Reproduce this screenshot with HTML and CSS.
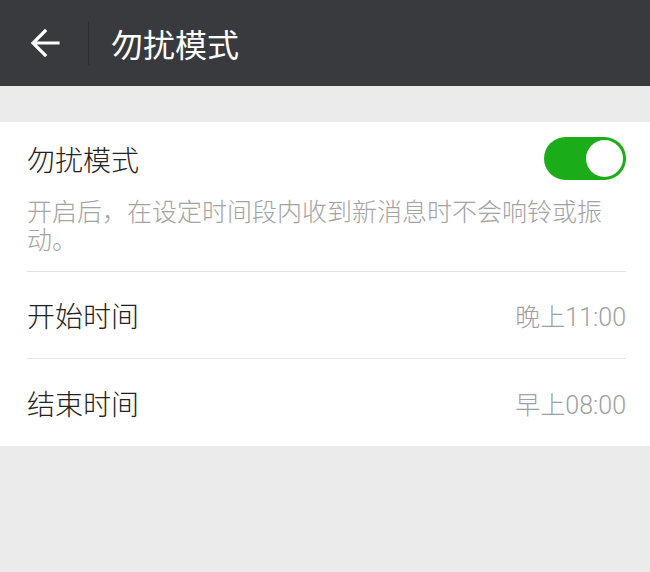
FILE: index.html
```html
<!DOCTYPE html>
<html lang="zh-CN">
<head>
    <meta charset="UTF-8">
    <meta name="viewport" content="width=device-width, initial-scale=1.0">
    <title>勿扰模式</title>
    <link rel="stylesheet" href="styles.css">
</head>
<body>
    <header class="topbar">
        <div class="back">
            <svg width="30" height="30" viewBox="0 0 30 30">
                <path d="M28 15H4M15 3L3 15L15 27" fill="none" stroke="#fff" stroke-width="3.2" stroke-linecap="square"/>
            </svg>
        </div>
        <div class="divider"></div>
        <h1 class="title">勿扰模式</h1>
    </header>

    <main class="page">
        <section class="card">
            <div class="mode">
                <div class="mode-head">
                    <span class="label">勿扰模式</span>
                    <div class="switch on"><span class="knob"></span></div>
                </div>
                <p class="desc">开启后，在设定时间段内收到新消息时不会响铃或振动。</p>
            </div>
            <div class="row">
                <span class="label">开始时间</span>
                <span class="value">晚上11:00</span>
            </div>
            <div class="row">
                <span class="label">结束时间</span>
                <span class="value">早上08:00</span>
            </div>
        </section>
    </main>
</body>
</html>
```

FILE: styles.css
```css
html, body {
    margin: 0;
    height: 100%;
}

body {
    font-family: "Noto Sans CJK SC", "Noto Sans", sans-serif;
    font-weight: 300;
    background-color: #ebebeb;
}

.topbar {
    height: 86px;
    background-color: #393a3e;
    display: flex;
    align-items: center;
}

.back {
    width: 88px;
    display: flex;
    align-items: center;
    padding-left: 30px;
    box-sizing: border-box;
}

.divider {
    width: 1px;
    height: 43px;
    background-color: #2b2c30;
}

.title {
    margin: 0 0 0 22px;
    font-size: 32px;
    font-weight: 400;
    color: #fff;
    line-height: 1;
}

.page {
    padding-top: 36px;
}

.card {
    background-color: #fff;
    padding: 0 24px 0 27px;
}

.mode {
    height: 150px;
    border-bottom: 1px solid #e3e3e3;
    box-sizing: border-box;
    padding-top: 15px;
}

.mode-head {
    display: flex;
    justify-content: space-between;
    align-items: center;
    height: 43px;
}

.label {
    font-size: 28px;
    color: #222;
}

.desc {
    margin: 16px 0 0;
    padding-right: 10px;
    font-size: 25px;
    line-height: 28px;
    color: #a3a3a3;
}

.switch {
    width: 82px;
    height: 43px;
    border-radius: 22px;
    background-color: #1aad19;
    position: relative;
}

.switch .knob {
    position: absolute;
    top: 3px;
    right: 3px;
    width: 37px;
    height: 37px;
    border-radius: 50%;
    background-color: #fff;
}

.row {
    height: 87px;
    display: flex;
    justify-content: space-between;
    align-items: center;
    border-bottom: 1px solid #e3e3e3;
    box-sizing: border-box;
}

.row:last-child {
    border-bottom: none;
}

.value {
    font-family: Roboto, "Noto Sans CJK SC", sans-serif;
    font-size: 25px;
    color: #a0a0a0;
}
```
